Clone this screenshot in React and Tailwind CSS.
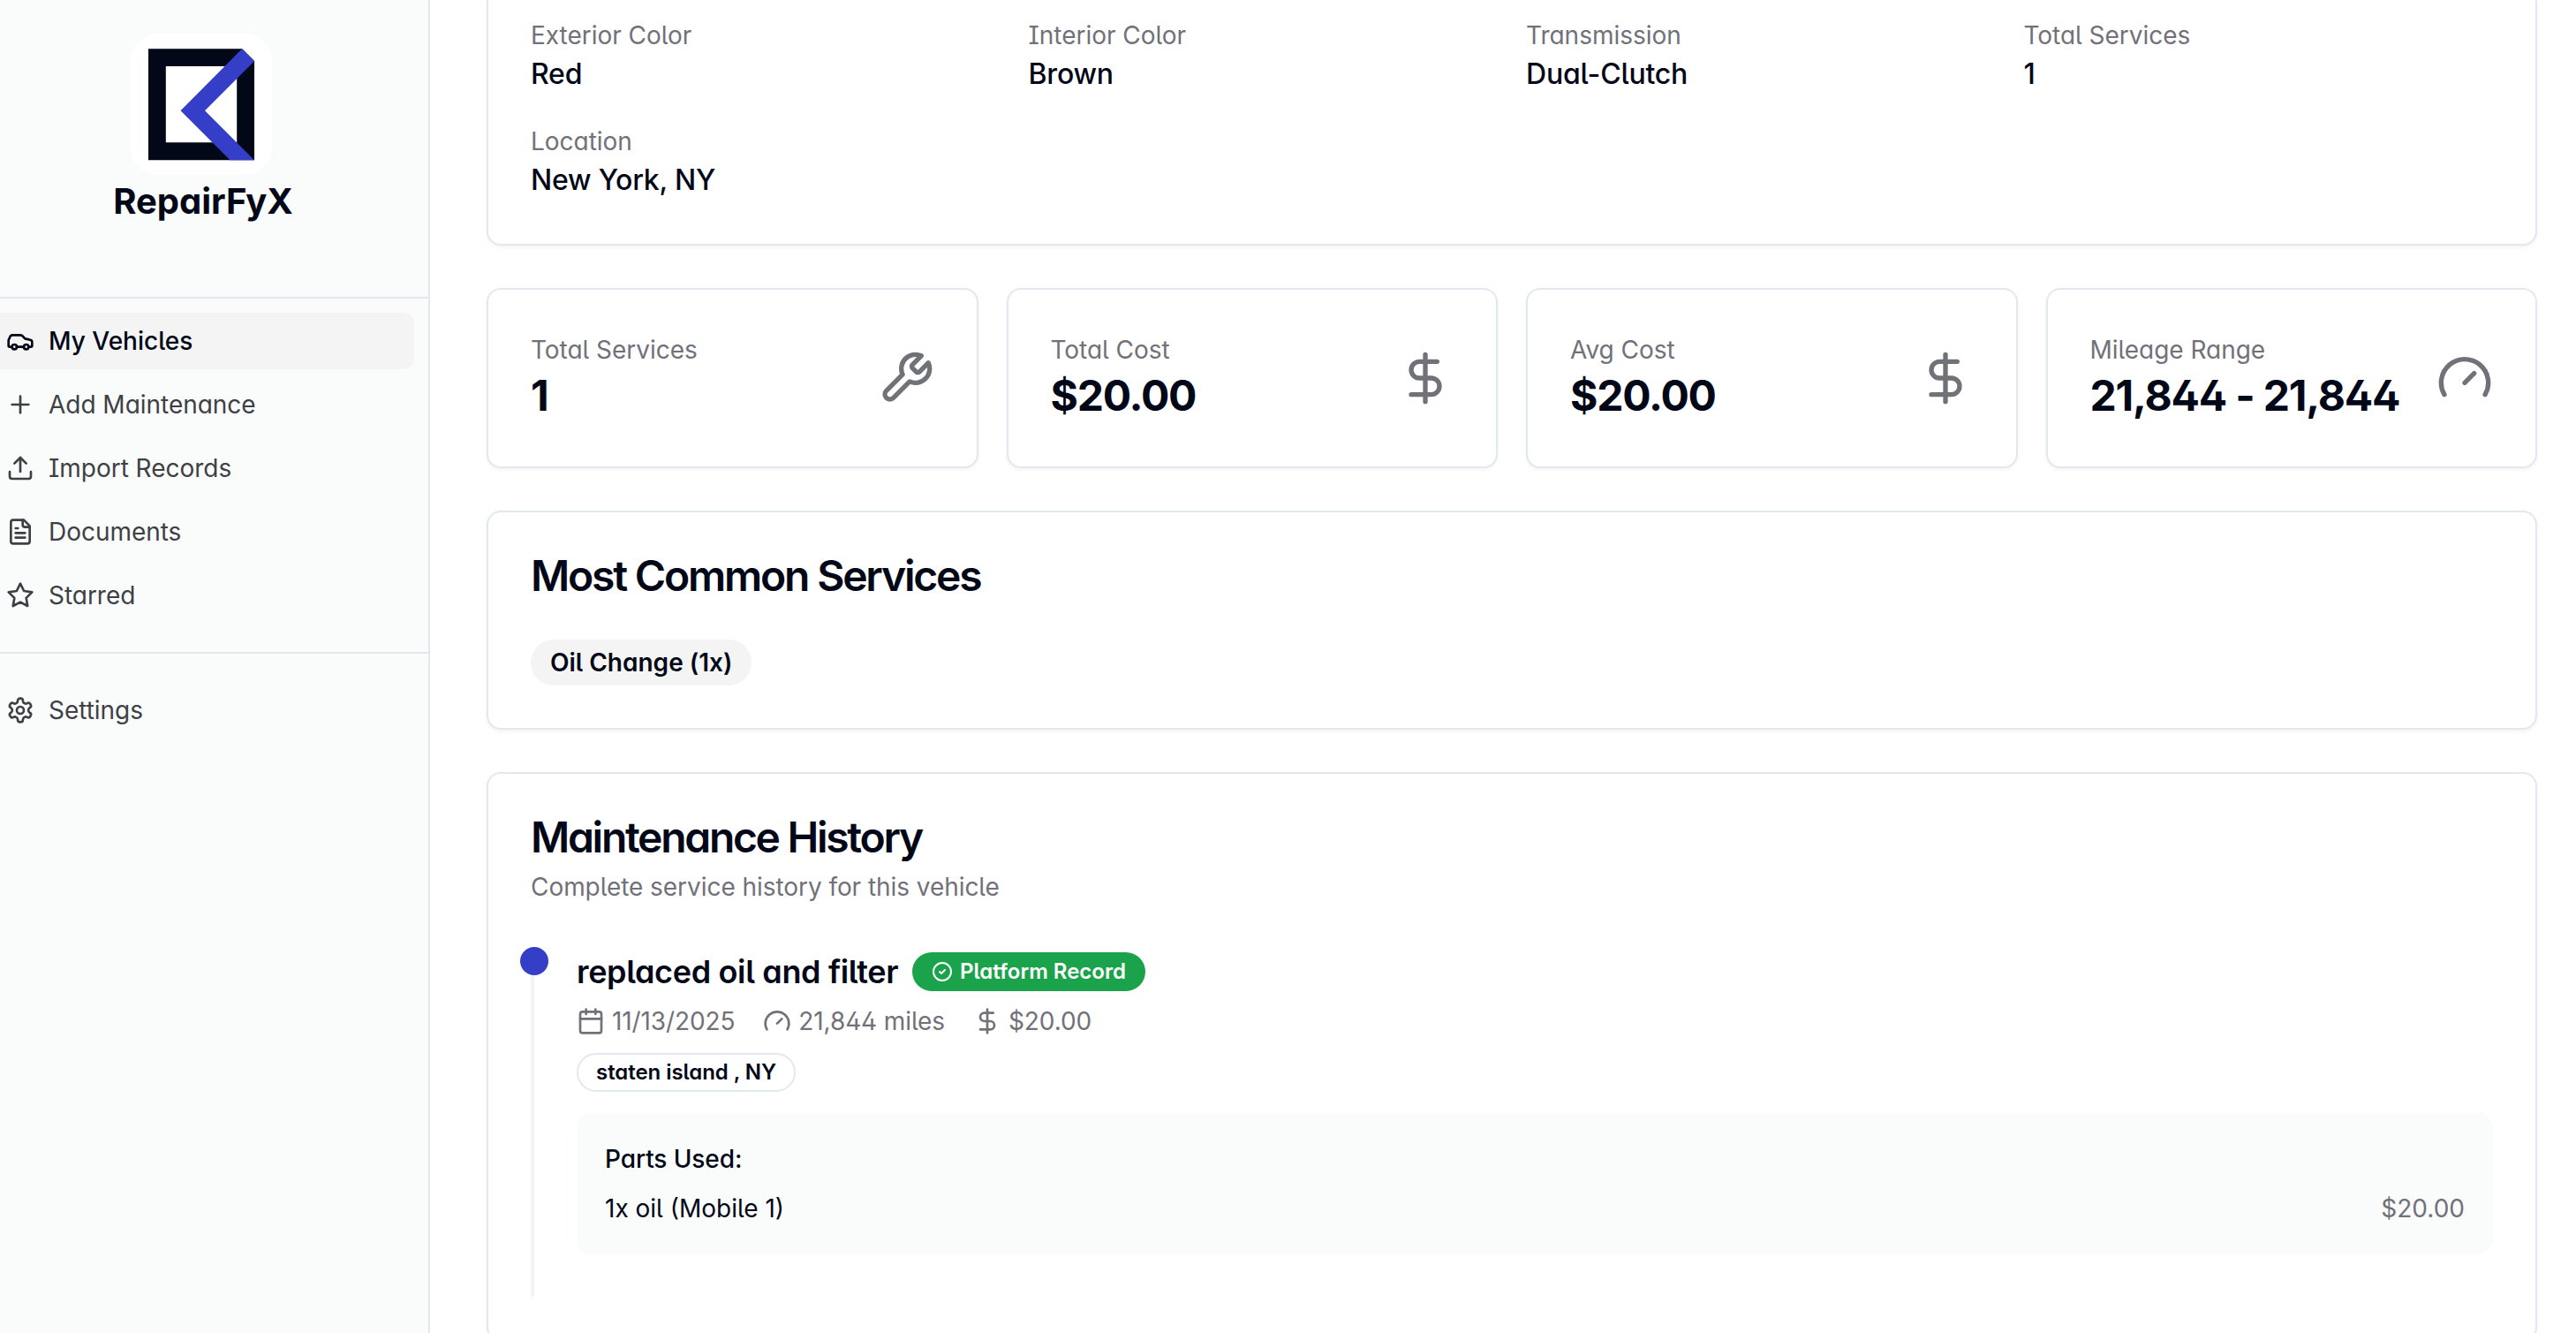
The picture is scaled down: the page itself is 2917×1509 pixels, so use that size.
import {
  Calendar,
  Car,
  CircleCheck,
  DollarSign,
  Gauge,
  Plus,
  Upload,
} from "lucide-react";

function Svg({ className, children }) {
  return (
    <svg
      viewBox="0 0 24 24"
      fill="none"
      stroke="currentColor"
      strokeWidth="2"
      strokeLinecap="round"
      strokeLinejoin="round"
      className={className}
    >
      {children}
    </svg>
  );
}

function Wrench({ className }) {
  return (
    <Svg className={className}>
      <path d="M14.7 6.3a1 1 0 0 0 0 1.4l1.6 1.6a1 1 0 0 0 1.4 0l3.77-3.77a6 6 0 0 1-7.94 7.94l-6.91 6.91a2.12 2.12 0 0 1-3-3l6.91-6.91a6 6 0 0 1 7.94-7.94l-3.76 3.76z" />
    </Svg>
  );
}

function FileText({ className }) {
  return (
    <Svg className={className}>
      <path d="M15 2H6a2 2 0 0 0-2 2v16a2 2 0 0 0 2 2h12a2 2 0 0 0 2-2V7Z" />
      <path d="M14 2v4a2 2 0 0 0 2 2h4" />
      <path d="M10 9H8" />
      <path d="M16 13H8" />
      <path d="M16 17H8" />
    </Svg>
  );
}

function Star({ className }) {
  return (
    <Svg className={className}>
      <polygon points="12 2 15.09 8.26 22 9.27 17 14.14 18.18 21.02 12 17.77 5.82 21.02 7 14.14 2 9.27 8.91 8.26 12 2" />
    </Svg>
  );
}

function Settings({ className }) {
  return (
    <Svg className={className}>
      <path d="M12.22 2h-.44a2 2 0 0 0-2 2v.18a2 2 0 0 1-1 1.73l-.43.25a2 2 0 0 1-2 0l-.15-.08a2 2 0 0 0-2.73.73l-.22.38a2 2 0 0 0 .73 2.73l.15.1a2 2 0 0 1 1 1.72v.51a2 2 0 0 1-1 1.74l-.15.09a2 2 0 0 0-.73 2.73l.22.38a2 2 0 0 0 2.73.73l.15-.08a2 2 0 0 1 2 0l.43.25a2 2 0 0 1 1 1.73V20a2 2 0 0 0 2 2h.44a2 2 0 0 0 2-2v-.18a2 2 0 0 1 1-1.73l.43-.25a2 2 0 0 1 2 0l.15.08a2 2 0 0 0 2.73-.73l.22-.39a2 2 0 0 0-.73-2.73l-.15-.08a2 2 0 0 1-1-1.74v-.5a2 2 0 0 1 1-1.74l.15-.09a2 2 0 0 0 .73-2.73l-.22-.38a2 2 0 0 0-2.73-.73l-.15.08a2 2 0 0 1-2 0l-.43-.25a2 2 0 0 1-1-1.73V4a2 2 0 0 0-2-2z" />
      <circle cx="12" cy="12" r="3" />
    </Svg>
  );
}

const navItems = [
  { label: "My Vehicles", icon: Car, active: true },
  { label: "Add Maintenance", icon: Plus },
  { label: "Import Records", icon: Upload },
  { label: "Documents", icon: FileText },
  { label: "Starred", icon: Star },
];

const details = [
  { label: "Exterior Color", value: "Red" },
  { label: "Interior Color", value: "Brown" },
  { label: "Transmission", value: "Dual-Clutch" },
  { label: "Total Services", value: "1" },
  { label: "Location", value: "New York, NY" },
];

const stats = [
  { label: "Total Services", value: "1", icon: Wrench },
  { label: "Total Cost", value: "$20.00", icon: DollarSign },
  { label: "Avg Cost", value: "$20.00", icon: DollarSign },
  { label: "Mileage Range", value: "21,844 - 21,844", icon: Gauge },
];

function Logo() {
  return (
    <div className="flex size-40 items-center justify-center rounded-[32px] bg-white">
      <svg viewBox="0 0 160 160" className="size-40">
        <path fill="#020817" fillRule="evenodd" d="M20 17.3H140V143.3H20ZM39.8 37V123.3H120.2V37Z" />
        <path fill="#fff" d="M126 17H141V32Z" />
        <path fill="#353ec6" d="M126 17.3L140 31.2L84 87.3L140 143.3H112.5L56.5 87.3Z" />
      </svg>
    </div>
  );
}

function NavItem({ label, icon: Icon, active }) {
  return (
    <a
      className={
        active
          ? "flex h-16 items-center gap-4 rounded-r-xl bg-[#f4f4f5] pl-[7px] text-[28px] font-medium text-[#020817]"
          : "flex h-16 items-center gap-4 pl-[7px] text-[28px] tracking-[-0.001em] text-[#3f3f46]"
      }
    >
      <Icon className="size-8" />
      {label}
    </a>
  );
}

function Card({ className = "", children }) {
  return (
    <div className={`border-2 border-[#e2e8f0] bg-white shadow-[0_2px_4px_rgba(0,0,0,0.05)] ${className}`}>
      {children}
    </div>
  );
}

export default function App() {
  return (
    <div className="flex h-[1509px] w-[2917px] overflow-hidden bg-white font-['Inter',sans-serif] text-[#020817] antialiased [font-feature-settings:'cv02','cv03','cv04','cv05','cv08','cv11']">
      <aside className="flex w-[487px] shrink-0 flex-col border-r-2 border-[#e2e8f0] bg-[#fafcfb]">
        <div className="flex h-[338px] flex-col items-center border-b-2 border-[#e2e8f0] pt-[38px] pr-[29px]">
          <Logo />
          <span className="mt-0.5 ml-1 text-[40px] leading-[56px] font-bold">RepairFyX</span>
        </div>
        <nav className="flex h-[402px] flex-col gap-2 border-b-2 border-[#e2e8f0] pt-4 pr-4">
          {navItems.map((item) => (
            <NavItem key={item.label} {...item} />
          ))}
        </nav>
        <nav className="pt-8 pr-4">
          <NavItem label="Settings" icon={Settings} />
        </nav>
      </aside>

      <main className="flex w-[2386px] shrink-0 flex-col gap-12 pl-16">
        {/* Vehicle details */}
        <Card className="grid h-[278px] shrink-0 grid-cols-4 content-start gap-8 rounded-b-2xl border-t-0 px-12 pt-5">
          {details.map((d) => (
            <div key={d.label}>
              <p className="text-[28px] leading-10 tracking-[-0.001em] text-[#71717a]">{d.label}</p>
              <p className="text-[32px] leading-[48px] font-medium tracking-[-0.006em]">{d.value}</p>
            </div>
          ))}
        </Card>

        <div className="grid grid-cols-4 gap-8">
          {stats.map(({ label, value, icon: Icon }) => (
            <Card key={label} className="flex items-center justify-between rounded-2xl p-12">
              <div>
                <p className="text-[28px] leading-10 tracking-[-0.001em] text-[#71717a]">{label}</p>
                <p className="text-5xl leading-[64px] font-bold tracking-[-0.025em] whitespace-nowrap">{value}</p>
              </div>
              <Icon className="size-16 shrink-0 text-[#71717a]" />
            </Card>
          ))}
        </div>

        <Card className="rounded-2xl p-12">
          <h3 className="mb-12 text-5xl leading-none font-semibold tracking-[-0.046em]">Most Common Services</h3>
          <div className="flex">
            <span className="rounded-full border-2 border-transparent bg-[#f4f4f5] px-5 py-1 text-[28px] leading-10 font-semibold">
              Oil Change (1x)
            </span>
          </div>
        </Card>

        <Card className="shrink-0 rounded-2xl p-12">
          <h3 className="text-5xl leading-none font-semibold tracking-[-0.048em]">Maintenance History</h3>
          <p className="mt-3 mb-12 text-[28px] leading-10 tracking-[-0.002em] text-[#71717a]">
            Complete service history for this vehicle
          </p>

          <div className="relative border-l-4 border-[#f4f4f5] pb-12 pl-12">
            <div className="absolute top-0 -left-4 size-8 rounded-full bg-[#353ec6]" />
            <div className="flex items-center gap-4">
              <h4 className="text-4xl leading-[56px] font-semibold tracking-[-0.0095em]">replaced oil and filter</h4>
              <span className="flex items-center gap-2 rounded-full bg-[#1aa34a] px-[22px] py-1.5 text-2xl leading-8 font-semibold text-white">
                <CircleCheck className="size-6" />
                Platform Record
              </span>
            </div>
            <div className="mt-2 flex gap-8 text-[28px] leading-10 tracking-[-0.004em] text-[#71717a]">
              <span className="flex items-center gap-2">
                <Calendar className="size-8" />
                11/13/2025
              </span>
              <span className="flex items-center gap-2">
                <Gauge className="size-8" />
                21,844 miles
              </span>
              <span className="flex items-center gap-2">
                <DollarSign className="size-8" />
                $20.00
              </span>
            </div>
            <div className="mt-4 flex">
              <span className="rounded-full border-2 border-[#e2e8f0] px-5 py-1 text-2xl leading-8 font-semibold tracking-[-0.002em]">
                staten island , NY
              </span>
            </div>
            <div className="mt-6 rounded-2xl bg-[#fafcfb] p-8 text-[28px] leading-10">
              <p className="mb-4 font-medium tracking-[-0.003em]">Parts Used:</p>
              <div className="flex justify-between">
                <span>1x oil (Mobile 1)</span>
                <span className="text-[#71717a]">$20.00</span>
              </div>
            </div>
          </div>
        </Card>
      </main>
    </div>
  );
}
